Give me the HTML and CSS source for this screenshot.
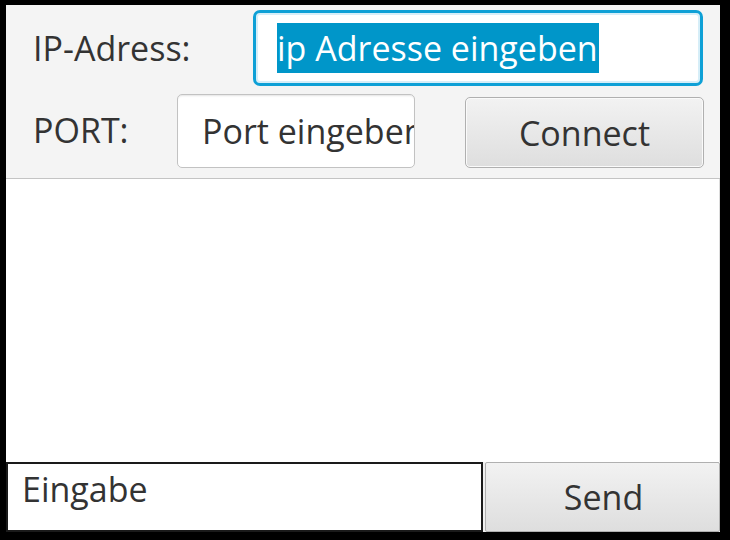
FILE: index.html
```html
<!DOCTYPE html>
<html lang="de">
<head>
<meta charset="utf-8">
<title>Client</title>
<link rel="stylesheet" href="styles.css">
</head>
<body>
<div class="window">
  <div class="top">
    <div class="row row-ip">
      <span class="label label-ip">IP-Adress:</span>
      <div class="field field-ip focused"><span class="sel">ip Adresse eingeben</span></div>
    </div>
    <div class="row row-port">
      <span class="label label-port">PORT:</span>
      <div class="field field-port"><span class="txt">Port eingeben</span></div>
      <div class="btn btn-connect">Connect</div>
    </div>
  </div>
  <div class="log"></div>
  <div class="bottom">
    <div class="input-msg">Eingabe</div>
    <div class="btn btn-send">Send</div>
  </div>
</div>
</body>
</html>
```
FILE: styles.css
```css
html, body {
  margin: 0;
  padding: 0;
  background: #000;
}
body {
  width: 730px;
  height: 540px;
  overflow: hidden;
  font-family: "Open Sans", "Noto Sans", sans-serif;
  font-size: 34px;
  color: #333;
}
.window {
  margin: 5px 0 0 6px;
  width: 714px;
  height: 527px;
  display: flex;
  flex-direction: column;
  background: #f4f4f4;
}
.top {
  height: 170px;
  box-sizing: content-box;
  padding: 5px 0 0 0;
  border-bottom: 1px solid #c4c4c4;
  display: flex;
  flex-direction: column;
  gap: 8px;
}
.row {
  display: flex;
  align-items: center;
  padding-left: 27px;
}
.row-ip { height: 76px; }
.row-port { height: 74px; align-items: flex-end; }
.label { display: block; }
.label-ip { width: 220px; }
.label-port { width: 144px; align-self: center; margin-top: -2px; }
.field {
  box-sizing: border-box;
  background: #fff;
  display: flex;
  align-items: center;
  overflow: hidden;
  white-space: nowrap;
}
.field-ip {
  width: 450px;
  height: 76px;
  border: 3px solid #0ea0d6;
  border-radius: 7px;
  box-shadow: inset 0 0 0 2px #d6eef8;
  padding-left: 21px;
}
.sel {
  background: #0096c9;
  color: #fff;
  line-height: 50px;
  display: inline-block;
  padding-right: 1px;
}
.field-port {
  width: 238px;
  height: 74px;
  border: 1px solid #c2c2c2;
  border-radius: 5px;
  box-shadow: inset 0 2px 2px -1px #e4e4e4;
  padding-left: 24px;
}
.txt { display: block; }
.btn {
  box-sizing: border-box;
  display: flex;
  align-items: center;
  justify-content: center;
  background: linear-gradient(#f2f2f2, #dedede);
  border: 1px solid #b0b0b0;
  color: #333;
}
.btn-connect {
  margin-left: 50px;
  width: 239px;
  height: 71px;
  border-radius: 5px;
  box-shadow: inset 0 0 0 1px #fafafa;
}
.log {
  height: 286px;
  background: #fff;
  border-right: 1px solid #dcdcdc;
  box-sizing: border-box;
}
.bottom {
  height: 70px;
  display: flex;
  gap: 2px;
  background: #f0f0f0;
}
.input-msg {
  box-sizing: border-box;
  width: 477px;
  height: 70px;
  background: #fff;
  border: 2px solid #1a1a1a;
  padding: 2px 0 0 14px;
  line-height: 46px;
}
.btn-send {
  flex: 1;
  height: 70px;
  border-radius: 2px;
  padding-left: 2px;
}
```
